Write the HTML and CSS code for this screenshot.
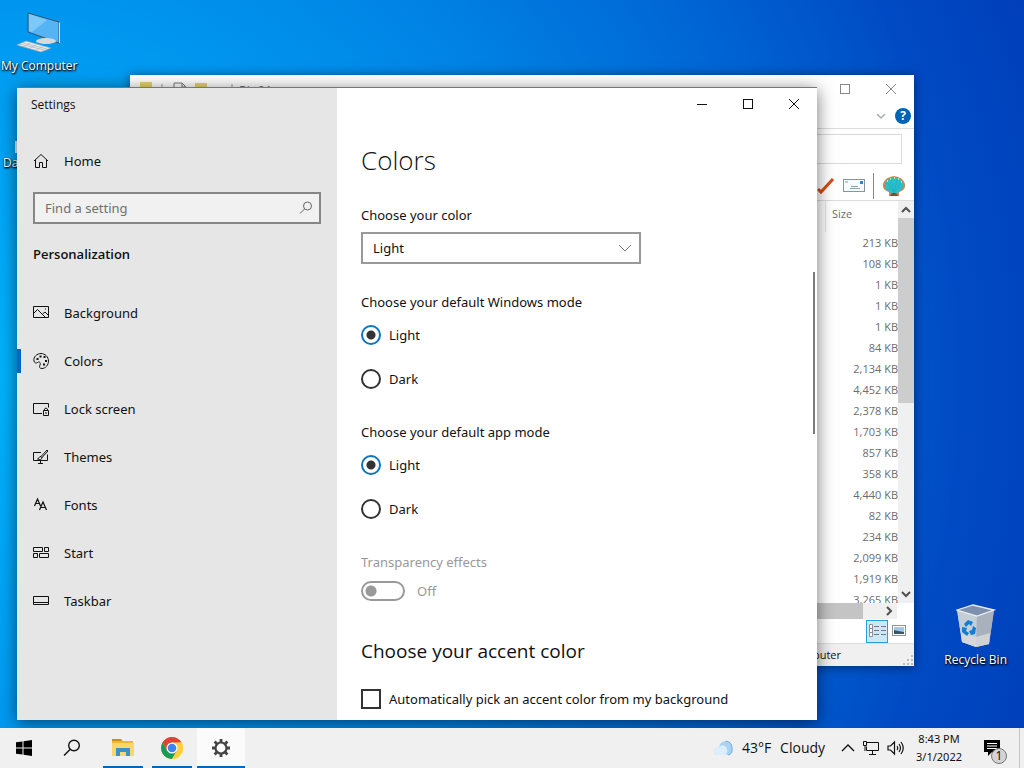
FILE: index.html
```html
<!DOCTYPE html>
<html lang="en">
<head>
    <meta charset="UTF-8">
    <meta name="viewport" content="width=device-width, initial-scale=1.0">
    <title>Settings</title>
    <link rel="stylesheet" href="styles.css">
</head>
<body>

    <main class="desktop">
        <a href="#" class="shortcut my-computer">
            <svg width="46" height="44" viewBox="0 0 46 44">
                <path d="M12 1 L43 10 V31 L12 20Z" fill="#55b4f3" stroke="#31566f" stroke-width="1"/>
                <path d="M13 2 L31 8 L16 20 L13 19Z" fill="#7cc8f8"/>
                <path d="M43 10 l1 1 v20 l-1 0z" fill="#d6dce0"/>
                <path d="M27 26 l7 2 v4 h-7z" fill="#b8c0c6"/>
                <ellipse cx="30" cy="29" rx="10" ry="3" fill="#d5dade"/>
                <path d="M10 29 L35 36 L25 40 L1 33Z" fill="#e8eaec" stroke="#9aa5ac" stroke-width="0.7"/>
                <path d="M7 31 L31 37 M4 32 L28 38 M14 31 L8 35 M21 32 L14 36 M28 34 L20 38" stroke="#b6bdc2" stroke-width="0.8"/>
            </svg>
            <span>My Computer</span>
        </a>
        <a href="#" class="shortcut hidden-app">
            <i></i>
            <span>Da</span>
        </a>
        <a href="#" class="shortcut recycle-bin">
            <svg width="40" height="44" viewBox="0 0 40 44">
                <path d="M1 6 L38 6 L33 40 L20 43 L6 38Z" fill="#b5bdc8"/>
                <path d="M1 6 L21 12 L20 43 L6 38Z" fill="#c5cdd6"/>
                <path d="M21 12 L38 6 L33 40 L20 43Z" fill="#a9b1bd"/>
                <path d="M5 30 L20 33 L34 29 L33 40 L20 43 L6 38Z" fill="#dadbdc" opacity="0.8"/>
                <path d="M1 6 L17 1 L38 6 L21 12Z" fill="#7f8fae" stroke="#e9eef3" stroke-width="1.3"/>
                <path d="M8 20 l4 -4 5 2 -2 4 -2 -2 -3 3z M6 23 l5 1 -1 3 3 2 -2 3 -5 -4z M15 31 l4 -1 1 -6 -3 -2 -1 4 -3 1z" fill="#0d7fd6"/>
            </svg>
            <span>Recycle Bin</span>
        </a>

        <!-- File manager behind the settings window -->
        <section class="window explorer">
            <header class="explorer-title">
                <svg width="130" height="16" viewBox="0 0 130 16">
                    <path d="M0 1h12v15H0z M55 2h12v14H55z" fill="#e8d46f"/>
                    <path d="M22 3v12 M92 3v12 M70 10h7" stroke="#999"/>
                    <path d="M34 15V2h8l3 3v10 M42 2v4h4" fill="none" stroke="#777"/>
                </svg>
                <span class="explorer-name">Bin64</span>
                <button class="caption" aria-label="Maximize"><svg width="12" height="12"><rect x="1.5" y="1.5" width="9" height="9"/></svg></button>
                <button class="caption" aria-label="Close"><svg width="12" height="12"><path d="M1 1 L11 11 M11 1 L1 11"/></svg></button>
            </header>
            <div class="ribbon">
                <svg width="10" height="8"><path d="M1 2 L5 6 L9 2" fill="none" stroke="#aaa" stroke-width="1.4"/></svg>
                <button class="help" aria-label="Help">?</button>
            </div>
            <div class="address"></div>
            <div class="toolbar">
                <svg width="18" height="18" viewBox="0 0 18 18"><path d="M1 12 L4 15 L16 2" fill="none" stroke="#d8490f" stroke-width="3"/></svg>
                <svg width="22" height="14" viewBox="0 0 22 14">
                    <rect x="0.5" y="0.5" width="21" height="12" fill="#f8fafb" stroke="#8296a3"/>
                    <rect x="17" y="2" width="3" height="3" fill="#3683cc"/>
                    <path d="M2 3h3 M8 7.500h7 M7 9.500h10" stroke="#8ba0ad"/>
                </svg>
                <i class="divider"></i>
                <svg width="24" height="22" viewBox="0 0 24 22">
                    <path d="M7 21 L7 17 Q0 15 1 9 Q3 2 12 1 Q21 2 23 9 Q24 15 17 17 L17 21Z" fill="#c58a55"/>
                    <path d="M12 19 Q2 16 3 9 Q6 2 12 2 Q19 2 21 9 Q22 16 12 19Z" fill="#27bfcb"/>
                    <path d="M12 18 L5 7 M12 18 L9 4 M12 18 L15 4 M12 18 L19 7" stroke="#22a9b8" stroke-width="0.6"/>
                    <path d="M5 6h1 M8 4h1 M12 3h1 M16 4h1 M19 7h1" stroke="#e9f77a" stroke-width="1.5"/>
                    <path d="M8 21 l2 -3 h4 l2 3z" fill="#7c4f33"/>
                </svg>
            </div>
            <div class="files">
                <div class="file-list">
                    <table>
                        <thead><tr><th scope="col">Size</th></tr></thead>
                        <tbody>
                            <tr><td>213 KB</td></tr>
                            <tr><td>108 KB</td></tr>
                            <tr><td>1 KB</td></tr>
                            <tr><td>1 KB</td></tr>
                            <tr><td>1 KB</td></tr>
                            <tr><td>84 KB</td></tr>
                            <tr><td>2,134 KB</td></tr>
                            <tr><td>4,452 KB</td></tr>
                            <tr><td>2,378 KB</td></tr>
                            <tr><td>1,703 KB</td></tr>
                            <tr><td>857 KB</td></tr>
                            <tr><td>358 KB</td></tr>
                            <tr><td>4,440 KB</td></tr>
                            <tr><td>82 KB</td></tr>
                            <tr><td>234 KB</td></tr>
                            <tr><td>2,099 KB</td></tr>
                            <tr><td>1,919 KB</td></tr>
                            <tr><td>3,265 KB</td></tr>
                        </tbody>
                    </table>
                </div>
                <div class="scroll-y">
                    <svg width="16" height="17"><path d="M4 11 L8 7 L12 11"/></svg>
                    <i></i>
                    <svg width="16" height="17"><path d="M4 6 L8 10 L12 6"/></svg>
                </div>
            </div>
            <div class="scroll-x">
                <i></i>
                <svg width="16" height="16"><path d="M6 4 L10 8 L6 12"/></svg>
            </div>
            <div class="views">
                <button class="view active" aria-label="Details">
                    <svg width="18" height="14" viewBox="0 0 18 14">
                        <path d="M1.500 0.500h3v12h-3z M1.500 4.500h3 M1.500 8.500h3" fill="#fff" stroke="#8b8f91"/>
                        <path d="M6 2.500h5 M6 6.500h5 M6 10.500h5 M13 2.500h5 M13 6.500h5 M13 10.500h5" stroke="#777"/>
                    </svg>
                </button>
                <button class="view" aria-label="Large icons">
                    <svg width="14" height="12" viewBox="0 0 14 12">
                        <rect x="0.500" y="0.500" width="13" height="10" fill="#fff" stroke="#8a949c"/>
                        <path d="M2 2h10v7H2z" fill="#9fc9e8"/>
                        <path d="M2 9 V5 l4 1 6 1 v2z" fill="#3c5364"/>
                    </svg>
                </button>
            </div>
            <footer class="status">
                <span>Computer</span>
                <svg width="10" height="10"><path d="M8 0h2v2H8z M4 4h2v2H4z M8 4h2v2H8z M0 8h2v2H0z M4 8h2v2H4z M8 8h2v2H8z" fill="#bbb"/></svg>
            </footer>
        </section>

        <section class="window settings">
            <aside class="sidebar">
                <div class="app-name">Settings</div>
                <a href="#" class="home">
                    <svg width="16" height="16" viewBox="0 0 16 16"><path d="M1 8 L8 1.500 L15 8 M2.500 7 V14.500 H6.500 V9.500 H9.500 V14.500 H13.500 V7"/></svg>
                    Home
                </a>
                <div class="search">
                    <input type="text" placeholder="Find a setting" aria-label="Find a setting">
                    <svg width="14" height="14" viewBox="0 0 14 14"><circle cx="8.500" cy="5" r="4"/><path d="M5.500 8 L1 12.500"/></svg>
                </div>
                <h2>Personalization</h2>
                <nav>
                    <a href="#">
                        <svg width="16" height="16" viewBox="0 0 16 16"><path d="M0.500 1.500h15v11h-15z M1 8 L4.500 4.500 L12 12 M9.500 9 L12 7 L15 10 M12 4h1"/></svg>
                        Background
                    </a>
                    <a href="#" class="current">
                        <svg width="16" height="16" viewBox="0 0 16 16">
                            <path d="M1 8 C0 4 4 0.500 8 0.500 C12 0.500 15.500 4 15.500 8 C15.500 12 12.500 15.500 9 15.500 C6.500 15.500 6 14 7 12 C8 10 6.500 8 4.500 9.500 C3 10.500 1.500 10 1 8Z"/>
                            <path d="M3.500 6h2 M6.500 3.500h2 M10.500 4h2 M12 8h2 M10 11.500h2" stroke-width="2"/>
                        </svg>
                        Colors
                    </a>
                    <a href="#">
                        <svg width="16" height="16" viewBox="0 0 16 16"><path d="M9 12.500H0.500v-10h15v4 M10.500 9.500h5v5h-5z M11.500 9.500v-1.500q1.500 -2 3 0v1.500 M13 11v2"/></svg>
                        Lock screen
                    </a>
                    <a href="#">
                        <svg width="16" height="16" viewBox="0 0 16 16">
                            <path d="M8 3.500H0.500v8h14v-6 M7.500 12v2 M5 14.500h5"/>
                            <path d="M14 1 L8 7.500 L9 8.500 L15 2Z M8 7.500 C5.500 7.500 6.500 9.500 4.500 10 C7 11 9 10.500 9 8.500Z"/>
                        </svg>
                        Themes
                    </a>
                    <a href="#">
                        <svg width="16" height="16" viewBox="0 0 16 16"><path d="M1.500 9 L4.500 2 L7.500 9 M2.500 6.500h4 M6.500 13 L10 5 L13.500 13 M8 10.500h4" stroke-width="1.200"/></svg>
                        Fonts
                    </a>
                    <a href="#">
                        <svg width="16" height="16" viewBox="0 0 16 16"><path d="M0.500 2.500h9v4h-9z M11.500 2.500h4v4h-4z M0.500 8.500h4v4h-4z M6.500 8.500h9v4h-9z"/></svg>
                        Start
                    </a>
                    <a href="#">
                        <svg width="16" height="16" viewBox="0 0 16 16"><path d="M0.500 3.500h15v8h-15z M1 9.500h14"/></svg>
                        Taskbar
                    </a>
                </nav>
            </aside>

            <div class="page">
                <div class="captions">
                    <button class="caption" aria-label="Minimize"><svg width="12" height="12"><path d="M1 6.500h10"/></svg></button>
                    <button class="caption" aria-label="Maximize"><svg width="12" height="12"><rect x="1.500" y="1.500" width="9" height="9"/></svg></button>
                    <button class="caption" aria-label="Close"><svg width="12" height="12"><path d="M1 1 L11 11 M11 1 L1 11"/></svg></button>
                </div>
                <form class="options">
                    <h1>Colors</h1>

                    <label class="title" for="color">Choose your color</label>
                    <div class="select">
                        <select id="color">
                            <option>Light</option>
                        </select>
                        <svg width="14" height="8" viewBox="0 0 14 8"><path d="M1 1 L7 7 L13 1"/></svg>
                    </div>

                    <fieldset>
                        <legend>Choose your default Windows mode</legend>
                        <label class="choice"><input type="radio" name="windows-mode" checked>Light</label>
                        <label class="choice"><input type="radio" name="windows-mode">Dark</label>
                    </fieldset>

                    <fieldset>
                        <legend>Choose your default app mode</legend>
                        <label class="choice"><input type="radio" name="app-mode" checked>Light</label>
                        <label class="choice"><input type="radio" name="app-mode">Dark</label>
                    </fieldset>

                    <div class="transparency">
                        <label for="transparency">Transparency effects</label>
                        <div class="switch">
                            <input type="checkbox" id="transparency" disabled>
                            <span>Off</span>
                        </div>
                    </div>

                    <h2>Choose your accent color</h2>
                    <label class="choice"><input type="checkbox">Automatically pick an accent color from my background</label>
                </form>
                <i class="page-thumb"></i>
            </div>
        </section>
    </main>

    <footer class="taskbar">
        <button class="task" aria-label="Start">
            <svg width="16" height="16" viewBox="0 0 16 16"><path d="M0 2.300 L6.500 1.400V7.500H0z M7.500 1.200 L16 0V7.500H7.500z M0 8.500H6.500V14.600L0 13.700z M7.500 8.500H16V16L7.500 14.800z" fill="#000"/></svg>
        </button>
        <button class="task" aria-label="Search">
            <svg width="18" height="18" viewBox="0 0 18 18"><circle cx="11" cy="6.500" r="5.300" fill="none" stroke="#111" stroke-width="1.400"/><path d="M7 10.500 L1 16.500" stroke="#111" stroke-width="1.500"/></svg>
        </button>
        <div class="apps">
            <button class="task running" aria-label="File Explorer">
                <svg width="22" height="18" viewBox="0 0 22 18">
                    <path d="M0 0h9l2 2h10v15H0z" fill="#f2b632"/>
                    <path d="M0 0h9l1 2H0z" fill="#d48c18"/>
                    <path d="M0 4h22v13H0z" fill="#fbd66a"/>
                    <path d="M4 9h14v8h-4v-4H8v4H4z" fill="#3f8fcb"/>
                </svg>
            </button>
            <button class="task running" aria-label="Chrome">
                <svg width="22" height="22" viewBox="0 0 22 22">
                    <circle cx="11" cy="11" r="11" fill="#ffcf3e"/>
                    <path d="M11 11 L1.500 5.500 A11 11 0 0 1 20.500 5.500 L11 5.500Z" fill="#dc4437"/>
                    <path d="M1.500 5.500 A11 11 0 0 0 11 22 L15.800 13.700 L6.200 13.700Z" fill="#179c58"/>
                    <path d="M20.500 5.500 A11 11 0 0 1 11 22 L15.800 13.700 L14 6Z" fill="#ffcf3e"/>
                    <path d="M1.500 5.500 L11 5.500 L6.200 13.700Z" fill="#dc4437"/>
                    <circle cx="11" cy="11" r="5.500" fill="#fff"/>
                    <circle cx="11" cy="11" r="4.300" fill="#3f83ee"/>
                </svg>
            </button>
            <button class="task running open" aria-label="Settings">
                <svg width="18" height="18" viewBox="0 0 18 18">
                    <circle cx="9" cy="9" r="5.500" fill="none" stroke="#444" stroke-width="2.200"/>
                    <path d="M9 0v3 M9 15v3 M0 9h3 M15 9h3 M2.600 2.600l2.200 2.200 M13.200 13.200l2.200 2.200 M15.400 2.600l-2.200 2.200 M4.800 13.200l-2.200 2.200" stroke="#444" stroke-width="2.800"/>
                </svg>
            </button>
        </div>
        <div class="tray">
            <button class="weather">
                <svg width="20" height="16" viewBox="0 0 20 16">
                    <path d="M4 15 Q0 14 1 10 Q3 7 6 8 Q7 1 13 1 Q19 2 19 8 Q20 14 15 15Z" fill="#a9d3f5"/>
                    <path d="M4 15 Q0 14 1 10 Q3 7 6 8 Q8 4 12 6 Q16 9 13 15Z" fill="#dceefb"/>
                    <path d="M13 1 Q19 2 19 8 Q20 14 15 15" fill="none" stroke="#6fa9d8"/>
                </svg>
                <span>43°F</span>
                <span>Cloudy</span>
            </button>
            <svg width="14" height="8" viewBox="0 0 14 8"><path d="M1 7 L7 1 L13 7" stroke-width="1.400"/></svg>
            <svg width="18" height="16" viewBox="0 0 18 16"><path d="M5 2.500h11.500v8H4.500v-4 M10.500 11v3 M7 14.500h7 M1.500 1.500h3v4h-3z M3 6v5"/></svg>
            <svg width="18" height="16" viewBox="0 0 18 16"><path d="M1 6h2.500l4 -4v12l-4 -4H1z M10 6q1.500 2 0 4 M12 4q3 4 0 8 M14 2q4.500 6 0 12" stroke-width="1.200"/></svg>
            <div class="clock">8:43 PM<br>3/1/2022</div>
            <button class="notices" aria-label="Notifications">
                <svg width="18" height="18" viewBox="0 0 18 18"><path d="M1 1h16v12H9l-4 4v-4H1z" fill="#000" stroke="none"/><path d="M4 4.500h10 M4 7h10 M4 9.500h10" stroke="#fff"/></svg>
                <span>1</span>
            </button>
        </div>
    </footer>

</body>
</html>
```

FILE: styles.css
```css
* {
    box-sizing: border-box;
}

body {
    font-family: "Noto Sans", "Open Sans", sans-serif;
    font-size: 13px;
    line-height: 20px;
    margin: 0;
    height: 100vh;
    display: flex;
    flex-direction: column;
    overflow: hidden;
    color: #111;
}

h1, h2, fieldset, legend {
    margin: 0;
    padding: 0;
    border: none;
}

h1, h2, .explorer, .shortcut {
    font-family: "Open Sans", "Noto Sans", sans-serif;
}

a {
    color: inherit;
    text-decoration: none;
}

button {
    font: inherit;
    color: inherit;
    background: none;
    border: none;
    padding: 0;
}

svg {
    display: block;
    flex: none;
}

/* Desktop */
.desktop {
    position: relative;
    flex: 1;
    background: radial-gradient(ellipse 110% 150% at 0% 52%, #00b2fb 0%, #009df3 28%, #0083e4 50%, #0062d2 72%, #004ac4 86%, #003cb6 100%);
}

.shortcut {
    position: absolute;
    display: flex;
    flex-direction: column;
    align-items: center;
    gap: 2px;
    color: white;
    font-size: 12px;
    line-height: 16px;
    white-space: nowrap;
    text-shadow: 1px 1px 2px #000, 0 1px 2px #000;
}

.my-computer {
    left: 1px;
    top: 12px;
}

.hidden-app {
    left: 3px;
    top: 141px;
    align-items: flex-start;
}

.hidden-app i {
    width: 12px;
    height: 12px;
    margin-left: 12px;
    background-color: #e6eefa;
}

.recycle-bin {
    right: 17px;
    bottom: 60px;
    gap: 4px;
}

.window {
    position: absolute;
    background-color: white;
}

/* Explorer */
.explorer {
    left: 130px;
    right: 110px;
    top: 75px;
    bottom: 62px;
    display: flex;
    flex-direction: column;
    box-shadow: 0 1px 10px rgba(0, 0, 0, 0.5);
    color: #6d6d6d;
    font-size: 11px;
}

.explorer-title {
    display: flex;
    align-items: center;
    height: 28px;
    padding-left: 10px;
}

.explorer-title .caption {
    color: #888;
}

.explorer-name {
    flex: 1;
    margin-left: -31px;
    padding-top: 4px;
    font-size: 12px;
}

.caption {
    width: 46px;
    height: 32px;
    display: grid;
    place-items: center;
}

.caption svg {
    fill: none;
    stroke: currentColor;
}

.ribbon {
    display: flex;
    align-items: center;
    justify-content: flex-end;
    gap: 9px;
    height: 26px;
    padding-right: 3px;
    border-bottom: 1px solid #ddd;
}

.help {
    width: 16px;
    height: 16px;
    border-radius: 50%;
    background-color: #0063b8;
    color: white;
    font-size: 12px;
    font-weight: bold;
    line-height: 16px;
}

.address {
    height: 30px;
    margin: 5px 12px 0;
    border: 1px solid #d9d9d9;
}

.toolbar {
    display: flex;
    align-items: center;
    justify-content: flex-end;
    gap: 8px;
    height: 37px;
    padding: 8px 8px 0 0;
    border-bottom: 1px solid #ddd;
}

.divider {
    width: 1px;
    height: 26px;
    background-color: #888;
}

.files {
    flex: 1;
    display: flex;
    min-height: 0;
}

.file-list {
    flex: 1;
    overflow: hidden;
}

.files table {
    width: 73px;
    margin-left: auto;
    border-collapse: collapse;
}

.files th {
    height: 31px;
    padding: 0 0 5px 6px;
    text-align: left;
    font-weight: normal;
    border-left: 1px solid #e2e2e2;
}

.files td {
    height: 21px;
    padding: 0;
    text-align: right;
}

.scroll-y {
    width: 16px;
    display: flex;
    flex-direction: column;
    background-color: #f0f0f0;
}

.scroll-y i {
    height: 46%;
    margin-bottom: auto;
    background-color: #cdcdcd;
}

.scroll-y path, .scroll-x path {
    fill: none;
    stroke: #505050;
    stroke-width: 2;
}

.scroll-x {
    display: flex;
    justify-content: space-between;
    height: 16px;
    margin-right: 17px;
    background-color: #f0f0f0;
}

.scroll-x i {
    width: 733px;
    background-color: #c4c4c4;
}

.views {
    display: flex;
    justify-content: flex-end;
    align-items: center;
    height: 25px;
    gap: 0;
    padding-right: 4px;
    border-bottom: 1px solid #ddd;
}

.view {
    width: 22px;
    height: 23px;
    display: grid;
    place-items: center;
}

.view.active {
    background-color: #cce8f4;
    border: 1px solid #26a0da;
}

.status {
    display: flex;
    justify-content: flex-end;
    align-items: center;
    height: 22px;
    gap: 62px;
    padding-right: 1px;
    background-color: #f0f0f0;
    color: #111;
}

.status svg {
    align-self: flex-end;
    margin-bottom: 1px;
}

/* Settings */
.settings {
    left: 17px;
    right: 207px;
    top: 87px;
    bottom: 8px;
    display: flex;
    border-top: 1px solid #777;
    box-shadow: 0 3px 16px rgba(0, 0, 0, 0.55);
}

.sidebar {
    width: 320px;
    background-color: #e6e6e6;
}

.app-name {
    padding: 7px 14px;
    font-size: 12px;
    font-family: "Open Sans", "Noto Sans", sans-serif;
}

.sidebar a {
    position: relative;
    display: flex;
    align-items: center;
    gap: 15px;
    height: 48px;
    padding-left: 16px;
}

.sidebar svg {
    fill: none;
    stroke: #111;
}

.home {
    margin-top: 15px;
}

.search {
    display: flex;
    align-items: center;
    height: 32px;
    margin: 7px 16px 20px;
    padding: 0 6px 0 10px;
    border: 2px solid #868686;
    background-color: #f1f1f1;
}

.search input {
    flex: 1;
    min-width: 0;
    padding: 0;
    border: none;
    outline: none;
    background: none;
    font: inherit;
}

.search input::placeholder {
    color: #707070;
}

.sidebar .search svg {
    stroke: #666;
}

.sidebar h2 {
    margin: 0 16px 25px;
    font-size: 13px;
    font-weight: 600;
    line-height: 20px;
}

.sidebar .current::before {
    content: "";
    position: absolute;
    left: 0;
    top: 12px;
    width: 4px;
    height: 24px;
    background-color: #0067c9;
}

.page {
    position: relative;
    flex: 1;
    overflow: hidden;
}

.captions {
    display: flex;
    justify-content: flex-end;
}

.options {
    padding: 22px 24px 0;
}

.options h1 {
    margin-bottom: 27px;
    font-size: 26px;
    font-weight: 300;
    line-height: 36px;
}

.title {
    display: block;
}

.select {
    position: relative;
    width: 280px;
    margin: 7px 0 28px;
}

.select select {
    display: block;
    width: 100%;
    height: 32px;
    padding: 0 10px;
    appearance: none;
    border: 2px solid #999;
    border-radius: 0;
    background-color: white;
    color: inherit;
    font: inherit;
}

.select svg {
    position: absolute;
    right: 9px;
    top: 12px;
    fill: none;
    stroke: #777;
    pointer-events: none;
}

fieldset {
    margin-bottom: 33px;
}

legend {
    margin-bottom: 13px;
}

.choice {
    display: flex;
    align-items: center;
    gap: 8px;
    height: 20px;
}

.choice + .choice {
    margin-top: 24px;
}

.choice input {
    appearance: none;
    flex: none;
    width: 20px;
    height: 20px;
    margin: 0;
    border: 2px solid #333;
}

.choice input[type="radio"] {
    border-radius: 50%;
}

.choice input[type="radio"]:checked {
    border-color: #0b76bd;
    background: radial-gradient(circle, #333 4px, white 5px);
}

.transparency {
    color: #999;
}

.transparency label {
    display: block;
    margin-bottom: 9px;
}

.switch {
    display: flex;
    align-items: center;
    gap: 12px;
}

.switch input {
    appearance: none;
    width: 44px;
    height: 20px;
    margin: 0;
    border: 2px solid #999;
    border-radius: 10px;
    background: radial-gradient(circle at 8px 8px, #999 5px, white 6px);
}

.options h2 {
    margin: 36px 0 24px;
    font-size: 19px;
    font-weight: normal;
    line-height: 28px;
}

.page-thumb {
    position: absolute;
    right: 2px;
    top: 184px;
    width: 2px;
    height: 162px;
    background-color: #7a7a7a;
}

/* Taskbar */
.taskbar {
    position: relative;
    display: flex;
    height: 40px;
    background-color: #f0f0f0;
}

.task {
    width: 48px;
    height: 40px;
    display: grid;
    place-items: center;
}

.apps {
    display: flex;
    gap: 1px;
    margin-left: 3px;
}

.running {
    background: linear-gradient(#0067c0, #0067c0) bottom / 40px 2px no-repeat;
}

.running.open {
    background-color: #fbfbfb;
    background-size: 48px 2px;
}

.tray {
    display: flex;
    align-items: center;
    gap: 7px;
    margin-left: auto;
    margin-right: 4px;
    padding-right: 4px;
    border-right: 1px solid #c4c4c4;
}

.tray > svg {
    fill: none;
    stroke: #111;
}

.weather {
    display: flex;
    align-items: center;
    gap: 9px;
    margin-right: 9px;
    font-size: 14px;
    font-family: "Open Sans", "Noto Sans", sans-serif;
}

.clock {
    margin-left: 4px;
    font-size: 11px;
    line-height: 18px;
    text-align: center;
}

.notices {
    position: relative;
    width: 46px;
    height: 40px;
    display: grid;
    place-items: center;
}

.notices span {
    position: absolute;
    left: 22px;
    bottom: 4px;
    width: 16px;
    height: 16px;
    border: 1px solid #777;
    border-radius: 50%;
    background-color: #d4d4d4;
    font-size: 12px;
    line-height: 14px;
}
```
